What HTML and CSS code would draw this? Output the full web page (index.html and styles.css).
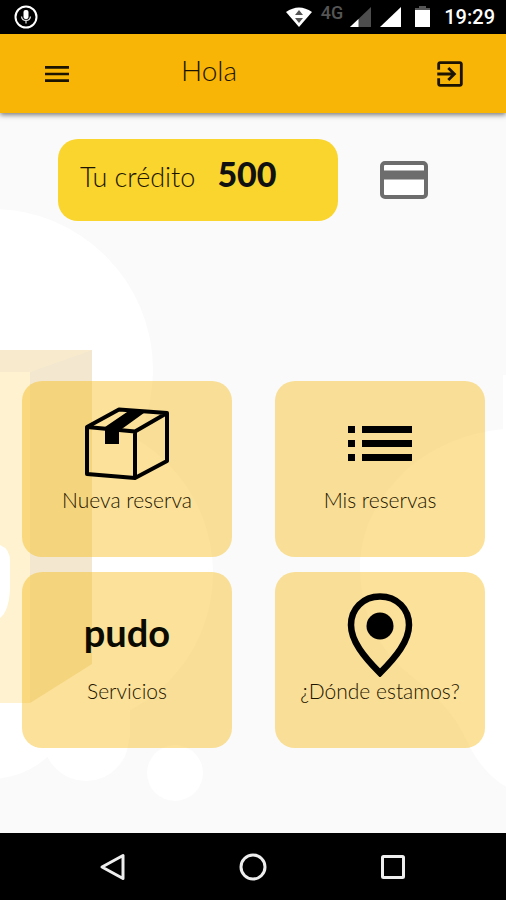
FILE: index.html
```html
<!DOCTYPE html>
<html lang="es">
<head>
    <meta charset="UTF-8">
    <meta name="viewport" content="width=device-width, initial-scale=1.0">
    <title>Pudo</title>
    <link rel="stylesheet" href="styles.css">
</head>
<body>

    <!-- Barra de estado -->
    <div class="status-bar">
        <svg class="status-mic" width="24" height="24" viewBox="0 0 24 24">
            <circle cx="12" cy="12" r="10.5" fill="none" stroke="#fff" stroke-width="2"/>
            <rect x="9.5" y="5" width="5" height="9" rx="2" fill="#fff"/>
            <path d="M7.5 11.5q.5 4 4.500 4t4.500-4M12 15v3.500" fill="none" stroke="#ddd" stroke-width="1.300"/>
        </svg>
        <svg class="status-wifi" width="26" height="20" viewBox="0 0 26 20">
            <path d="M0 5Q13-4 26 5L13 20z" fill="#fff"/>
            <path d="M9 8l4-5 4 5zM9 11h8l-4 5z" fill="#555"/>
        </svg>
        <span class="network">4G</span>
        <svg class="status-signal" width="21" height="20" viewBox="0 0 21 20">
            <path d="M21 0v20H0z" fill="#4d4d4d"/>
            <path d="M8.500 12v8H0z" fill="#fff"/>
        </svg>
        <svg class="status-signal-full" width="21" height="20" viewBox="0 0 21 20">
            <path d="M21 0v20H0z" fill="#fff"/>
        </svg>
        <svg class="status-battery" width="15" height="22" viewBox="0 0 15 22">
            <path d="M4 0h7v3H4z" fill="#555"/>
            <path d="M0 2h15v2H0z" fill="#555"/>
            <path d="M0 4h15v17H0z" fill="#fff"/>
        </svg>
        <span class="clock">19:29</span>
    </div>

    <!-- Cabecera -->
    <header class="app-bar">
        <button class="icon-button" type="button" aria-label="Menú">
            <svg width="32" height="32" viewBox="0 0 24 24">
                <path d="M3 18h18v-2H3v2zm0-5h18v-2H3v2zm0-7v2h18V6H3z" fill="#1c1400"/>
            </svg>
        </button>
        <h1 class="title">Hola</h1>
        <button class="icon-button" type="button" aria-label="Salir">
            <svg width="34" height="34" viewBox="0 0 24 24">
                <path d="M10.090 15.590L11.500 17l5-5-5-5-1.410 1.410L12.670 11H3v2h9.670l-2.580 2.590zM19 3H5c-1.110 0-2 .9-2 2v4h2V5h14v14H5v-4H3v4c0 1.100.89 2 2 2h14c1.100 0 2-.9 2-2V5c0-1.100-.9-2-2-2z" fill="#1c1400"/>
            </svg>
        </button>
    </header>

    <main class="content">
        <!-- Dibujo de fondo -->
        <svg class="backdrop" viewBox="0 0 506 720" preserveAspectRatio="xMidYMid slice" aria-hidden="true">
            <g fill="#fff">
                <circle cx="-8" cy="257" r="161"/>
                <circle cx="58" cy="460" r="155"/>
                <circle cx="-10" cy="580" r="86"/>
                <circle cx="86" cy="625" r="43"/>
                <circle cx="175" cy="660" r="28"/>
                <path d="M0 500h130v125H0z"/>
                <path d="M506 262h-3v54q-56 6-96 40-46 44-47 96 0 70 50 110 40 30 56 64 14 32 40 48z"/>
            </g>
            <path d="M0 237h92v22H0z" fill="#f8ebcd"/>
            <path d="M0 259h30v331H0z" fill="#fef2d1"/>
            <path d="M30 259l62-22v314l-62 39z" fill="#f3e8cf"/>
            <path d="M0 432q10 4 10 16v28q-1 22-10 29z" fill="#fff"/>
        </svg>

        <!-- Crédito -->
        <section class="credit">
            <div class="credit-box">
                <span class="credit-label">Tu crédito</span>
                <strong class="credit-value">500</strong>
            </div>
            <button class="icon-button" type="button" aria-label="Tarjeta">
                <svg width="48" height="38" viewBox="0 0 48 38">
                    <rect x="2" y="2" width="44" height="34" rx="3" fill="#fff" stroke="#6d6d6d" stroke-width="4"/>
                    <path d="M2 9.500h44v9H2z" fill="#6d6d6d"/>
                </svg>
            </button>
        </section>

        <!-- Opciones -->
        <nav class="cards">
            <a class="card" href="#nueva">
                <span class="card-icon">
                    <svg width="86" height="74" viewBox="0 0 86 74">
                        <path d="M3 20L35 2.500 83 6v48L51 71 3 67zM3 20l48 4.500V71M51 24.500L83 6" fill="none" stroke="#000" stroke-width="4" stroke-linejoin="round"/>
                        <path d="M46 3l16 1.500L35 24v13H21V20z"/>
                    </svg>
                </span>
                <span class="card-label">Nueva reserva</span>
            </a>
            <a class="card" href="#reservas">
                <span class="card-icon">
                    <svg width="64" height="36" viewBox="0 0 64 36">
                        <path d="M0 0h7v7H0zM14 0h50v7H14zM0 14h7v7H0zM14 14h50v7H14zM0 28h7v7H0zM14 28h50v7H14z"/>
                    </svg>
                </span>
                <span class="card-label">Mis reservas</span>
            </a>
            <a class="card" href="#servicios">
                <span class="card-icon brand">pudo</span>
                <span class="card-label">Servicios</span>
            </a>
            <a class="card" href="#donde">
                <span class="card-icon">
                    <svg width="66" height="84" viewBox="0 0 66 84">
                        <path d="M33 3.500C16 3.500 4 16 4 32c0 16 13 32 29 48 16-16 29-32 29-48C62 16 50 3.500 33 3.500z" fill="none" stroke="#000" stroke-width="6.500"/>
                        <circle cx="33" cy="33" r="13.500"/>
                    </svg>
                </span>
                <span class="card-label">¿Dónde estamos?</span>
            </a>
        </nav>
    </main>

    <!-- Botones del sistema -->
    <footer class="system-bar">
        <button class="icon-button" type="button" aria-label="Atrás">
            <svg width="28" height="28" viewBox="0 0 28 28">
                <path d="M24 2.500v23L3 14z" fill="none" stroke="#eee" stroke-width="3" stroke-linejoin="round"/>
            </svg>
        </button>
        <button class="icon-button" type="button" aria-label="Inicio">
            <svg width="28" height="28" viewBox="0 0 28 28">
                <circle cx="14" cy="14" r="12" fill="none" stroke="#eee" stroke-width="3"/>
            </svg>
        </button>
        <button class="icon-button" type="button" aria-label="Recientes">
            <svg width="28" height="28" viewBox="0 0 28 28">
                <rect x="3.500" y="3.500" width="21" height="21" rx="1" fill="none" stroke="#eee" stroke-width="3"/>
            </svg>
        </button>
    </footer>

</body>
</html>
```
FILE: styles.css
```css
* {
    box-sizing: border-box;
}

body {
    display: flex;
    flex-direction: column;
    min-height: 100vh;
    margin: 0;
    background-color: #fafafa;
    color: #1c1400;
    font-family: Lato, "Open Sans", sans-serif;
}

svg {
    display: block;
}

.icon-button {
    display: flex;
    padding: 0;
    border: 0;
    background: none;
    cursor: pointer;
}

.status-bar {
    display: flex;
    align-items: center;
    height: 34px;
    padding: 0 11px 0 14px;
    background-color: #000;
    color: #fff;
    font-family: Roboto, sans-serif;
}

.status-wifi {
    margin-left: auto;
}

.network {
    margin: 0 7px 0 9px;
    padding-bottom: 8px;
    color: #555;
    font-size: 18px;
    font-weight: 500;
    line-height: 18px;
}

.status-signal-full {
    margin: 0 14px 0 9px;
}

.clock {
    margin-left: 14px;
    font-size: 20px;
    font-weight: 500;
}

.app-bar {
    display: flex;
    align-items: center;
    height: 79px;
    padding: 0 39px 0 41px;
    background-color: #f9b506;
    box-shadow: 0 2px 5px rgba(0, 0, 0, 0.5);
    z-index: 1;
}

.title {
    flex: 1;
    margin: 0;
    padding: 0 0 8px 108px;
    font-size: 28px;
    font-weight: 300;
}

.content {
    position: relative;
    flex: 1;
    overflow: hidden;
    padding: 26px 21px 80px 22px;
}

.backdrop {
    position: absolute;
    top: 0;
    left: 0;
    width: 100%;
    height: 100%;
}

.credit,
.cards {
    position: relative;
}

.credit {
    display: flex;
    align-items: center;
    gap: 42px;
    padding: 0 36px;
}

.credit-box {
    display: flex;
    flex: 0 1 280px;
    align-items: baseline;
    gap: 22px;
    height: 82px;
    padding: 14px 22px;
    border-radius: 20px;
    background-color: #f9d52d;
}

.credit-label {
    font-size: 27px;
    font-weight: 300;
}

.credit-value {
    color: #111;
    font-size: 34px;
    font-weight: 900;
}

.cards {
    display: grid;
    grid-template-columns: 1fr 1fr;
    gap: 15px 43px;
    margin-top: 160px;
}

.card {
    display: flex;
    flex-direction: column;
    align-items: center;
    min-height: 176px;
    padding: 20px 10px;
    border-radius: 20px;
    background-color: rgba(245, 184, 12, 0.42);
    color: #1c1400;
    text-decoration: none;
}

.card-icon {
    display: flex;
    align-items: center;
    height: 86px;
}

.brand {
    padding-bottom: 6px;
    color: #0a0a00;
    font-size: 38px;
    font-weight: 700;
}

.card-label {
    font-size: 21px;
    font-weight: 300;
    line-height: 26px;
}

.system-bar {
    display: flex;
    align-items: center;
    justify-content: space-around;
    height: 67px;
    padding: 0 43px;
    background-color: #000;
}
```
